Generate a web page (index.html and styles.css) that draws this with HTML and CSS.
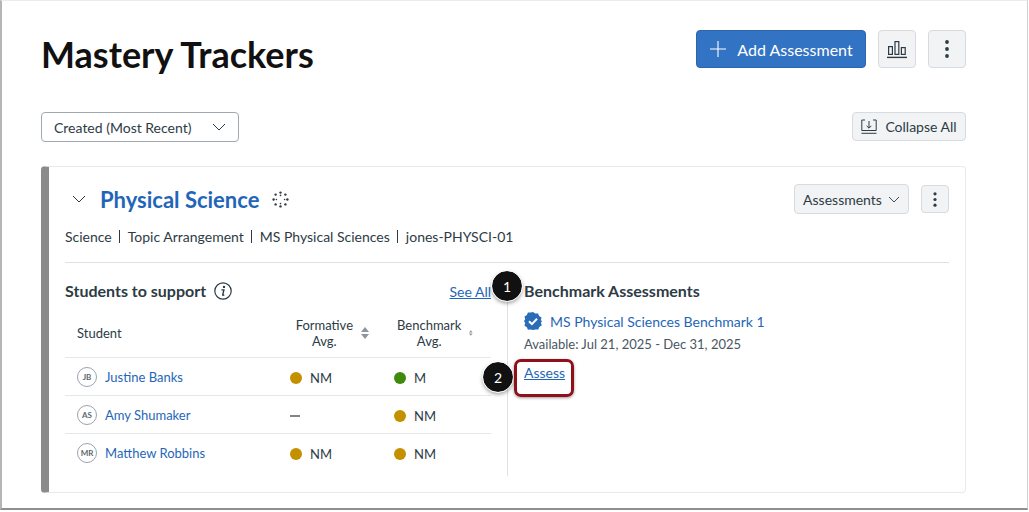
FILE: index.html
```html
<!DOCTYPE html>
<html lang="en">
<head>
  <meta charset="UTF-8">
  <title>Mastery Trackers</title>
  <link rel="stylesheet" href="styles.css">
</head>
<body>
  <div class="frame">
    <!-- Page heading -->
    <div class="page-head">
      <h1>Mastery Trackers</h1>
      <div class="head-actions">
        <button class="btn btn-primary">
          <svg width="18" height="18" viewBox="0 0 18 18"><path d="M9 1v16M1 9h16" stroke="#fff" stroke-width="1.1" fill="none"/></svg>
          Add Assessment
        </button>
        <button class="btn btn-icon">
          <svg width="20" height="20" viewBox="0 0 20 20" fill="none" stroke="#2d3b45" stroke-width="1.2"><rect x="1.6" y="7.6" width="3.8" height="7.8"/><rect x="8" y="2.6" width="3.8" height="12.8"/><rect x="14.4" y="8.6" width="3.8" height="6.8"/><path d="M0 18.4h20" stroke-width="1.4"/></svg>
        </button>
        <button class="btn btn-icon">
          <svg width="4" height="18" viewBox="0 0 4 18" fill="#2d3b45"><circle cx="2" cy="2" r="1.9"/><circle cx="2" cy="9" r="1.9"/><circle cx="2" cy="16" r="1.9"/></svg>
        </button>
      </div>
    </div>

    <!-- Sort + collapse -->
    <div class="toolbar">
      <div class="sort-select">
        <span>Created (Most Recent)</span>
        <svg width="14" height="8" viewBox="0 0 14 8"><path d="M1 1l6 6 6-6" stroke="#2d3b45" stroke-width="1" fill="none"/></svg>
      </div>
      <button class="btn btn-collapse">
        <svg width="16" height="15" viewBox="0 0 16 15" fill="none" stroke="#2d3b45" stroke-width="1"><path d="M4 1H.8v10.5h14.4V1H12M.5 14.3h15M8 2v7M5.6 6.8L8 9.2l2.4-2.4"/></svg>
        Collapse All
      </button>
    </div>

    <!-- Tracker card -->
    <div class="card">
      <div class="card-top">
        <div class="card-title">
          <svg class="title-chevron" width="14" height="8" viewBox="0 0 14 8"><path d="M1 1l6 6 6-6" stroke="#2d3b45" stroke-width="1" fill="none"/></svg>
          <h2>Physical Science</h2>
          <svg class="canvas-logo" width="17" height="17" viewBox="0 0 17 17" fill="#2d3b45">
            <circle cx="8.5" cy="1.6" r="1.2"/><circle cx="8.5" cy="15.4" r="1.2"/><circle cx="1.6" cy="8.5" r="1.2"/><circle cx="15.4" cy="8.5" r="1.2"/>
            <circle cx="3.6" cy="3.6" r="1.2"/><circle cx="13.4" cy="3.6" r="1.2"/><circle cx="3.6" cy="13.4" r="1.2"/><circle cx="13.4" cy="13.4" r="1.2"/>
            <circle cx="8.5" cy="4.4" r=".8"/><circle cx="8.5" cy="12.6" r=".8"/><circle cx="4.4" cy="8.5" r=".8"/><circle cx="12.6" cy="8.5" r=".8"/>
          </svg>
        </div>
        <div class="card-actions">
          <button class="btn btn-menu">
            Assessments
            <svg width="12" height="7" viewBox="0 0 12 7"><path d="M1 1l5 5 5-5" stroke="#2d3b45" stroke-width=".9" fill="none"/></svg>
          </button>
          <button class="btn btn-icon btn-icon-sm">
            <svg width="4" height="15" viewBox="0 0 4 15" fill="#2d3b45"><circle cx="2" cy="1.8" r="1.6"/><circle cx="2" cy="7.5" r="1.6"/><circle cx="2" cy="13.2" r="1.6"/></svg>
          </button>
        </div>
      </div>

      <div class="crumbs">
        <span>Science</span>
        <span>Topic Arrangement</span>
        <span>MS Physical Sciences</span>
        <span>jones-PHYSCI-01</span>
      </div>

      <div class="card-body">
        <!-- Students table -->
        <div class="students">
          <div class="section-head">
            <h3>Students to support</h3>
            <svg class="info-icon" width="18" height="18" viewBox="0 0 18 18"><circle cx="9" cy="9" r="8.2" fill="none" stroke="#2d3b45" stroke-width="1.2"/><circle cx="10" cy="4.9" r="1.2" fill="#2d3b45"/><path d="M7.4 7.9h2.5L8.7 12.8c-.1.5.4.6 1.6.1" fill="none" stroke="#2d3b45" stroke-width="1.4"/></svg>
            <a class="see-all" href="#">See All</a>
          </div>
          <div class="row row-head">
            <div class="cell-student">Student</div>
            <div class="col-sort">
              <span>Formative<br>Avg.</span>
              <svg width="8" height="12" viewBox="0 0 8 12" fill="#8d959f"><path d="M4 0l4 5H0zM4 12L0 7h8z"/></svg>
            </div>
            <div class="col-sort">
              <span>Benchmark<br>Avg.</span>
              <svg width="8" height="12" viewBox="0 0 8 12" fill="#8d959f"><path d="M4 0l4 5H0zM4 12L0 7h8z"/></svg>
            </div>
          </div>
          <div class="row">
            <div class="cell-student"><span class="avatar">JB</span><a href="#">Justine Banks</a></div>
            <div class="score"><i class="dot dot-nm"></i>NM</div>
            <div class="score"><i class="dot dot-m"></i>M</div>
          </div>
          <div class="row">
            <div class="cell-student"><span class="avatar">AS</span><a href="#">Amy Shumaker</a></div>
            <div class="score"><i class="dash"></i></div>
            <div class="score"><i class="dot dot-nm"></i>NM</div>
          </div>
          <div class="row row-last">
            <div class="cell-student"><span class="avatar">MR</span><a href="#">Matthew Robbins</a></div>
            <div class="score"><i class="dot dot-nm"></i>NM</div>
            <div class="score"><i class="dot dot-nm"></i>NM</div>
          </div>
        </div>

        <!-- Benchmark assessments -->
        <div class="benchmarks">
          <h3>Benchmark Assessments</h3>
          <div class="bench-name">
            <svg width="18" height="18" viewBox="0 0 18 18"><path fill="#2b6cb8" d="M9 0l2.3 1.6 2.8-.2 1 2.6 2.4 1.5-.7 2.7L18 9l-1 1.8.7 2.7-2.4 1.5-1 2.6-2.8-.2L9 18l-2.3-.4-2.8.2-1-2.6-2.4-1.5.7-2.7L0 9l1.2-1.8-.7-2.7L2.9 3l1-2.6 2.8.2z"/><path d="M5 9.2l2.9 2.9L13 6.8" fill="none" stroke="#fff" stroke-width="2"/></svg>
            <a href="#">MS Physical Sciences Benchmark 1</a>
          </div>
          <div class="bench-dates">Available: Jul 21, 2025 - Dec 31, 2025</div>
          <a class="assess-link" href="#">Assess</a>
        </div>
      </div>
    </div>

    <!-- Callouts over the screenshot -->
    <div class="callout callout-one">1</div>
    <div class="callout callout-two">2</div>
    <div class="assess-box"></div>
  </div>
</body>
</html>
```

FILE: styles.css
```css
* {
  box-sizing: border-box;
}

html, body {
  margin: 0;
  height: 100%;
  background: #fff;
}

body {
  font-family: Lato, "Liberation Sans", sans-serif;
  color: #2d3b45;
  overflow: hidden;
}

a {
  color: #1f66b8;
  text-decoration: none;
}

/* Outer screenshot frame */
.frame {
  position: relative;
  width: 1028px;
  height: 510px;
  padding: 0 61px 0 39px;
  border-left: 2px solid #b5b5b5;
  border-right: 1px solid #cfcfcf;
  border-top: 1px solid #ececec;
  border-bottom: 2px solid #8f8f8f;
}

/* Buttons */
.btn {
  font-family: inherit;
  display: inline-flex;
  align-items: center;
  justify-content: center;
  border: 1px solid #d7dade;
  border-radius: 4px;
  background: #f2f3f4;
  color: #2d3b45;
  padding: 0;
}

.btn-primary {
  width: 170px;
  height: 38px;
  gap: 10px;
  background: #3373c4;
  border-color: #2a65ae;
  color: #fff;
  font-size: 16px;
}

.btn-icon {
  width: 38px;
  height: 38px;
}

.btn-icon-sm {
  width: 28px;
  height: 28px;
}

.btn-collapse {
  width: 114px;
  height: 29px;
  gap: 8px;
  font-size: 14px;
}

.btn-menu {
  width: 115px;
  height: 30px;
  gap: 6px;
  font-size: 14px;
}

/* Heading row */
.page-head {
  display: flex;
  justify-content: space-between;
  align-items: flex-start;
  padding-top: 29px;
}

h1 {
  margin: 0;
  font-size: 36px;
  line-height: 48px;
  font-weight: 700;
  color: #111;
}

.head-actions {
  display: flex;
  gap: 12px;
}

/* Sort + collapse */
.toolbar {
  display: flex;
  justify-content: space-between;
  margin-top: 34px;
}

.sort-select {
  width: 198px;
  height: 30px;
  display: flex;
  align-items: center;
  justify-content: space-between;
  padding: 0 12px;
  font-size: 14px;
  border: 1px solid #a0a8b2;
  border-radius: 4px;
}

/* Card */
.card {
  margin-top: 24px;
  height: 327px;
  padding: 17px 16px 0 16px;
  border: 1px solid #e8e9eb;
  border-left: 8px solid #8b8b8b;
  border-radius: 4px;
}

.card-top {
  display: flex;
  justify-content: space-between;
  align-items: center;
  height: 30px;
}

.card-title {
  display: flex;
  align-items: center;
}

.title-chevron {
  margin-left: 7px;
  margin-right: 14px;
}

h2 {
  margin: 0;
  font-size: 22px;
  font-weight: 700;
  color: #1f66b8;
}

.canvas-logo {
  margin-left: 13px;
}

.card-actions {
  display: flex;
  align-items: center;
  gap: 12px;
}

.crumbs {
  display: flex;
  margin-top: 13px;
  padding-bottom: 15px;
  font-size: 14px;
  line-height: 20px;
  border-bottom: 1px solid #dfe1e3;
}

.crumbs span + span {
  margin-left: 8px;
  padding-left: 8px;
  position: relative;
}

.crumbs span + span::before {
  content: "";
  position: absolute;
  left: -1px;
  top: 3px;
  height: 13px;
  border-left: 1px solid #2d3b45;
}

.card-body {
  display: flex;
  margin-top: 8px;
}

.students {
  width: 426px;
}

h3 {
  margin: 0;
  font-size: 16px;
  line-height: 24px;
  font-weight: 700;
}

.section-head {
  display: flex;
  align-items: center;
  height: 24px;
  margin-top: 8px;
  gap: 8px;
}

.see-all {
  margin-left: auto;
  font-size: 14px;
  text-decoration: underline;
}

.row {
  display: grid;
  grid-template-columns: 225px 104px 97px;
  align-items: center;
  height: 38px;
  border-bottom: 1px solid #e6e7e9;
  font-size: 13px;
}

.row-head {
  height: 49px;
  margin-top: 6px;
  line-height: 16px;
}

.row-last {
  border-bottom: 0;
}

.cell-student {
  display: flex;
  align-items: center;
  gap: 8px;
  padding-left: 12px;
}

.col-sort {
  display: flex;
  align-items: center;
  justify-content: flex-end;
  gap: 8px;
  text-align: center;
  padding-right: 0;
}

.row-head .col-sort:nth-child(2) {
  padding-right: 0;
  width: 79px;
  margin-left: 0;
}

.row-head .col-sort:nth-child(3) {
  width: 76px;
  margin-left: 3px;
}

.avatar {
  width: 20px;
  height: 20px;
  display: flex;
  align-items: center;
  justify-content: center;
  border: 1px solid #9aa3ad;
  border-radius: 50%;
  font-size: 8px;
  font-weight: 700;
  color: #5a6772;
}

.score {
  display: flex;
  align-items: center;
  gap: 8px;
  margin-top: 2px;
}

.dot {
  width: 12px;
  height: 12px;
  border-radius: 50%;
}

.dot-nm {
  background: #c49000;
}

.dot-m {
  background: #3f8a0c;
}

.dash {
  width: 10px;
  border-top: 2px solid #7b858e;
}

/* Benchmark column */
.benchmarks {
  margin-left: 16px;
  padding: 8px 0 0 16px;
  height: 205px;
  border-left: 1px solid #dfe1e3;
  font-size: 14px;
}

.bench-name {
  display: flex;
  align-items: center;
  gap: 8px;
  margin-top: 9px;
}

.bench-dates {
  margin-top: 4px;
  font-size: 13px;
  line-height: 20px;
  color: #4a5661;
}

.assess-link {
  display: inline-block;
  margin-top: 10px;
  text-decoration: underline;
}

/* Overlays */
.callout {
  position: absolute;
  width: 30px;
  height: 30px;
  display: flex;
  align-items: center;
  justify-content: center;
  border-radius: 50%;
  background: #111;
  color: #fff;
  font-size: 14px;
  box-shadow: 0 2px 4px rgba(0, 0, 0, 0.45);
  outline: 1px solid #fff;
}

.callout-one {
  left: 490px;
  top: 270px;
}

.callout-two {
  left: 481px;
  top: 361px;
}

.assess-box {
  position: absolute;
  left: 512px;
  top: 358px;
  width: 60px;
  height: 38px;
  border: 3px solid #8f1018;
  border-radius: 7px;
  box-shadow: 0 1px 3px rgba(0, 0, 0, 0.4);
}
```
